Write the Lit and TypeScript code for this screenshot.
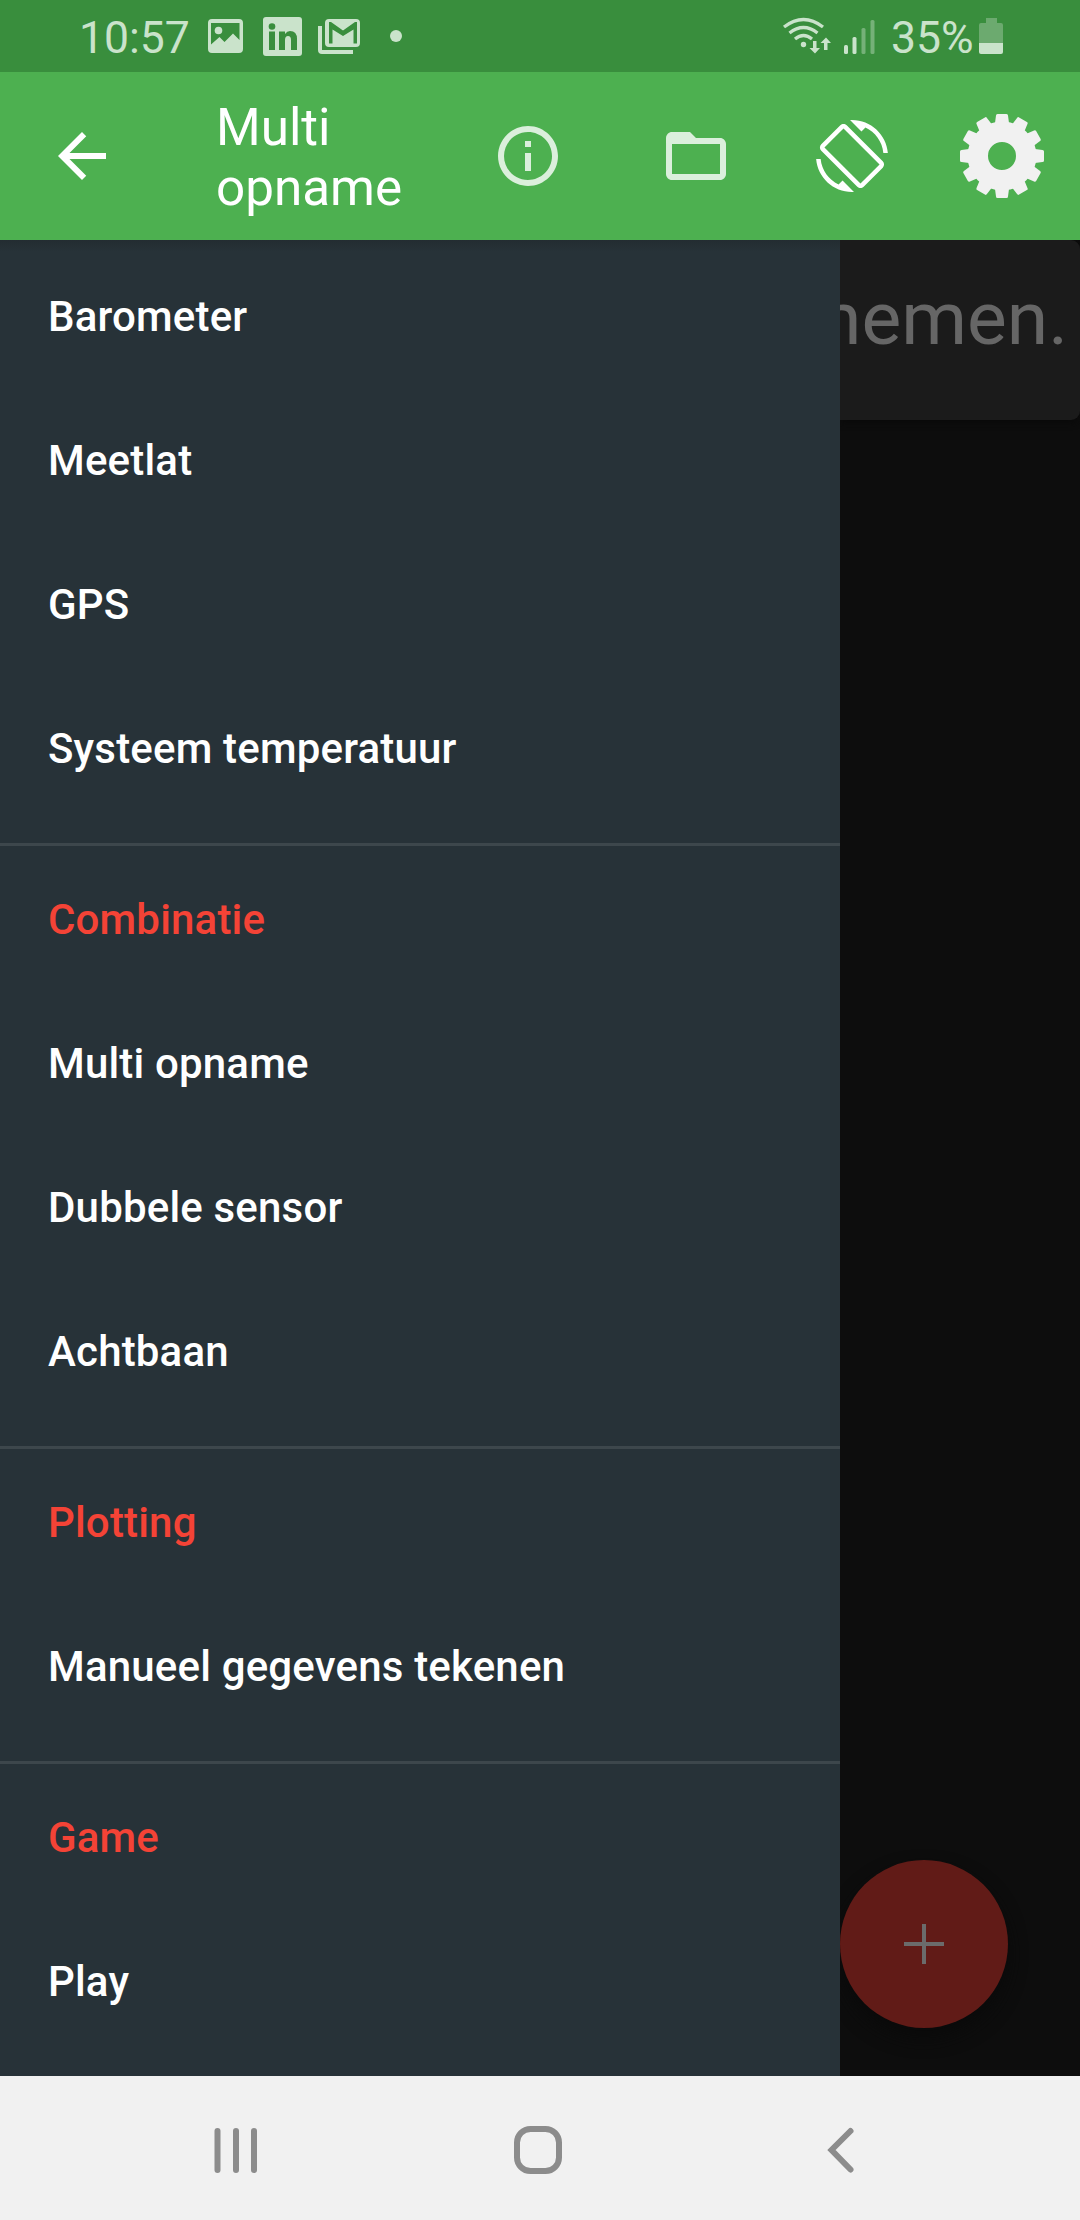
import { LitElement, html, css, svg } from "lit";
import { customElement } from "lit/decorators.js";

const groups: { title?: string; items: string[] }[] = [
  { items: ["Barometer", "Meetlat", "GPS", "Systeem temperatuur"] },
  { title: "Combinatie", items: ["Multi opname", "Dubbele sensor", "Achtbaan"] },
  { title: "Plotting", items: ["Manueel gegevens tekenen"] },
  { title: "Game", items: ["Play"] },
];

const teeth = Array.from({ length: 12 }, (_, i) => i * 30);

@customElement("app-root")
export class AppRoot extends LitElement {
  static styles = css`
    :host {
      display: flex;
      flex-direction: column;
      width: 1080px;
      height: 2220px;
      overflow: hidden;
      font-family: Roboto, "Noto Sans", sans-serif;
      color: #fff;
    }
    svg { display: block; flex: none; }
    .status {
      height: 72px;
      flex: none;
      display: flex;
      justify-content: space-between;
      background: #398e3d;
      color: #cae3cb;
      font-size: 44.5px;
      line-height: 76px;
    }
    .left { display: flex; padding-left: 79px; }
    .right { display: flex; padding-right: 76px; }
    .clock { width: 121px; white-space: nowrap; }
    .pct { width: 88px; padding-left: 1px; white-space: nowrap; }
    .bar {
      height: 168px;
      flex: none;
      display: flex;
      align-items: center;
      background: #4db050;
      position: relative;
      z-index: 2;
    }
    .back { margin-left: 46px; }
    .title {
      margin: 0 0 0 98px;
      padding-top: 4px;
      width: 246px;
      font-size: 51.2px;
      font-weight: 400;
      line-height: 60px;
    }
    .info { margin-left: 30px; }
    .folder { margin-left: 96px; }
    .rotate { margin-left: 84px; }
    .gear { margin-left: 72px; }
    .body {
      height: 1836px;
      flex: none;
      display: flex;
      background: #0d0d0d;
    }
    .drawer {
      width: 840px;
      flex: none;
      overflow: hidden;
      padding-top: 3px;
      box-sizing: border-box;
      position: relative;
      z-index: 1;
      background: linear-gradient(#232c31, #273238 12px);
      font-size: 42px;
      font-weight: 500;
      letter-spacing: 0.18px;
    }
    .group { padding: 2px 0 22px; }
    .group + .group { border-top: 3px solid #3d474c; }
    .row { height: 144px; line-height: 144px; padding-left: 48px; white-space: nowrap; }
    .head { color: #f44336; }
    .content {
      width: 240px;
      display: flex;
      flex-direction: column;
      justify-content: space-between;
    }
    .card {
      box-sizing: border-box;
      height: 180px;
      display: flex;
      justify-content: flex-end;
      border-radius: 0 9px 9px 0;
      background: #1b1b1b;
      color: #666;
      font-size: 75px;
      line-height: 156px;
      white-space: nowrap;
      box-shadow: 0 3px 6px #0a0a0a;
      padding-right: 12px;
    }
    .fab {
      width: 168px;
      height: 168px;
      margin-bottom: 48px;
      border-radius: 50%;
      background: #611b17;
      box-shadow: 0 10px 18px #0a0a0a;
      display: flex;
      align-items: center;
      justify-content: center;
    }
    .nav {
      box-sizing: border-box;
      height: 144px;
      padding-top: 4px;
      flex: none;
      background: #f1f1f1;
      display: flex;
      align-items: center;
    }
    .recents { margin-left: 212px; }
    .home { margin-left: 254px; }
    .prev { margin-left: 264px; }
  `;

  render() {
    return html`
      <div class="status">
        <div class="left">
          <span class="clock">10:57</span>
          <svg width="220" height="72" viewBox="200 0 220 72" fill="#cae3cb">
            <path fill-rule="evenodd" d="M212 19H239Q243 19 243 23V49Q243 53 239 53H212Q208 53 208 49V23Q208 19 212 19ZM211 23V44.500L219.500 37L224.500 42L233 33.500L239.500 40V23Z"/>
            <circle cx="218.500" cy="30.500" r="3.800"/>
            <path fill-rule="evenodd" d="M266 17H299Q302 17 302 20V53Q302 56 299 56H266Q263 56 263 53V20Q263 17 266 17ZM269 31.500V50H275V31.500ZM279 31.500V50H285V40Q285 36 288 36Q291 36 291 40V50H297V39Q297 31 290 31Q287 31 285 34V31.500Z"/>
            <circle cx="272" cy="26.500" r="3.300" fill="#398e3d"/>
            <path fill-rule="evenodd" d="M329 19H356Q360 19 360 23V43Q360 47 356 47H329Q325 47 325 43V23Q325 19 329 19ZM329 22V43.500H332.500V29.500L343 36L353.500 29.500V43.500H357V22H355L343 30.500L331 22Z"/>
            <path d="M318 26H322V50H353V54H322Q318 54 318 50Z"/>
            <circle cx="396" cy="36" r="6"/>
          </svg>
        </div>
        <div class="right">
          <svg width="108" height="72" viewBox="782 0 108 72">
            <g fill="none" stroke="#cae3cb" stroke-width="3.300">
              <path d="M784 27Q803.500 12 823 27M789.500 33Q803.500 22 817.500 33M795 39Q803.500 32 812 39"/>
            </g>
            <g fill="#cae3cb">
              <circle cx="803.500" cy="44.500" r="2.700"/>
              <path d="M813 41H816.500V48H820L815 53.500L809.500 48H813ZM824 50H827.500V43H831L826 37.500L820.500 43H824Z"/>
              <rect x="844" y="45" width="4" height="9" rx="1.500"/>
              <rect x="852.500" y="37" width="4" height="17" rx="1.500"/>
            </g>
            <g fill="#75b178">
              <rect x="861.500" y="28" width="4" height="26" rx="1.500"/>
              <rect x="870.500" y="20" width="4" height="34" rx="1.500"/>
            </g>
          </svg>
          <span class="pct">35%</span>
          <svg width="25" height="72" viewBox="979 0 25 72">
            <path fill="#6caa6f" d="M986 18H997V23H1001Q1003 23 1003 25V43H979V25Q979 23 981 23H986Z"/>
            <path fill="#cae3cb" d="M979 43H1003V52Q1003 54 1001 54H981Q979 54 979 52Z"/>
          </svg>
        </div>
      </div>

      <header class="bar">
        <svg class="back" width="72" height="72" viewBox="0 0 24 24" fill="#fff"><path d="M20 11H7.830l5.590-5.590L12 4l-8 8 8 8 1.410-1.410L7.830 13H20v-2z"/></svg>
        <h1 class="title">Multi<br>opname</h1>
        <svg class="info" width="72" height="72" viewBox="0 0 24 24" fill="#dbefdc"><path d="M11 17h2v-6h-2v6zm1-15C6.480 2 2 6.480 2 12s4.480 10 10 10 10-4.480 10-10S17.520 2 12 2zm0 18c-4.410 0-8-3.590-8-8s3.590-8 8-8 8 3.590 8 8-3.590 8-8 8zM11 9h2V7h-2v2z"/></svg>
        <svg class="folder" width="72" height="72" viewBox="0 0 24 24" fill="#dbefdc"><path d="M20 6h-8l-2-2H4c-1.100 0-1.990.9-1.990 2L2 18c0 1.100.9 2 2 2h16c1.100 0 2-.9 2-2V8c0-1.100-.9-2-2-2zm0 12H4V8h16v10z"/></svg>
        <svg class="rotate" width="72" height="72" viewBox="0 0 24 24" fill="#fff"><path d="M16.480 2.520c3.270 1.550 5.610 4.720 5.970 8.480h1.500C23.440 4.840 18.290 0 12 0l-.66.030 3.810 3.810 1.330-1.320zm-6.250-.77c-.59-.59-1.540-.59-2.120 0L1.750 8.110c-.59.59-.59 1.540 0 2.120l12.020 12.020c.59.590 1.540.590 2.120 0l6.360-6.360c.59-.59.59-1.540 0-2.120L10.230 1.750zm4.600 19.440L2.810 9.170l6.360-6.360 12.020 12.020-6.360 6.360zm-7.310.29C4.250 19.940 1.910 16.760 1.550 13H.05C.56 19.160 5.710 24 12 24l.66-.03-3.810-3.810-1.330 1.320z"/></svg>
        <svg class="gear" width="84" height="84" viewBox="-42 -42 84 84" fill="#f1f1f1">
          <circle r="24.200" fill="none" stroke="#f1f1f1" stroke-width="20.400"/>
          ${teeth.map((a) => svg`<path transform="rotate(${a})" d="M-7 -33L-6 -40.500Q-6 -42 -4.500 -42H4.500Q6 -42 6 -40.500L7 -33Z"/>`)}
        </svg>
      </header>

      <main class="body">
        <nav class="drawer">
          ${groups.map((g) => html`<section class="group">
            ${g.title ? html`<div class="row head">${g.title}</div>` : ""}
            ${g.items.map((t) => html`<div class="row">${t}</div>`)}
          </section>`)}
        </nav>
        <div class="content">
          <div class="card">nemen.</div>
          <div class="fab">
            <svg width="40" height="40" viewBox="0 0 40 40" fill="#6b6b6b"><path d="M18 0H22V18H40V22H22V40H18V22H0V18H18Z"/></svg>
          </div>
        </div>
      </main>

      <footer class="nav">
        <svg class="recents" width="48" height="60" viewBox="0 0 48 60" fill="#8c8c8c">
          <rect x="2.500" y="8" width="6" height="45" rx="3"/><rect x="21" y="8" width="6" height="45" rx="3"/><rect x="39" y="8" width="6" height="45" rx="3"/>
        </svg>
        <svg class="home" width="48" height="60" viewBox="0 0 48 60" fill="none"><rect x="3" y="9" width="42" height="42" rx="13.500" stroke="#8c8c8c" stroke-width="6"/></svg>
        <svg class="prev" width="30" height="60" viewBox="0 0 30 60" fill="none" stroke="#8c8c8c" stroke-width="6" stroke-linecap="round"><path d="M24.500 11L5.500 30L24.500 49.500"/></svg>
      </footer>
    `;
  }
}
